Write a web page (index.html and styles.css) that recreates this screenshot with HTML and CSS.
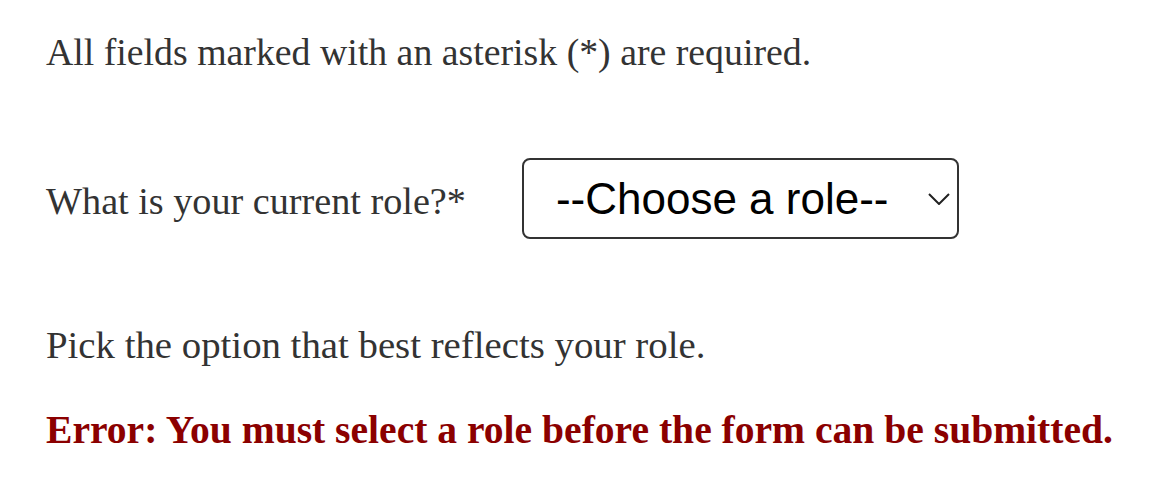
FILE: index.html
```html
<!DOCTYPE html>
<html lang="en">
<head>
<meta charset="utf-8">
<title>Role form</title>
<link rel="stylesheet" href="styles.css">
</head>
<body>
<form class="form">
  <p class="note">All fields marked with an asterisk (*) are required.</p>
  <div class="field">
    <label class="label" for="role">What is your current role?*</label>
    <div class="select-wrap">
      <select id="role" class="select">
        <option>--Choose a role--</option>
      </select>
      <svg class="chevron" width="22" height="12" viewBox="0 0 22 12" aria-hidden="true"><path d="M1 1 L11 11 L21 1" fill="none" stroke="#222" stroke-width="2"/></svg>
    </div>
  </div>
  <p class="hint">Pick the option that best reflects your role.</p>
  <p class="error">Error: You must select a role before the form can be submitted.</p>
</form>
</body>
</html>
```
FILE: styles.css
```css
html, body {
  margin: 0;
  padding: 0;
  background: #fff;
}
.form {
  padding: 30px 0 0 46px;
  font-family: "Liberation Serif", "Times New Roman", serif;
  font-size: 38.5px;
  color: #333;
}
.note {
  margin: 0;
  line-height: 44px;
  font-size: 37.8px;
}
.field {
  display: flex;
  align-items: center;
  gap: 56px;
  margin-top: 84px;
}
.label {
  line-height: 44px;
  font-size: 38.2px;
  position: relative;
  top: 2px;
}
.select-wrap {
  position: relative;
}
.select {
  appearance: none;
  -webkit-appearance: none;
  width: 437px;
  height: 81px;
  box-sizing: border-box;
  border: 2px solid #333;
  border-radius: 8px;
  background: #fff;
  font-family: "Liberation Sans", Arial, sans-serif;
  font-size: 44px;
  color: #000;
  padding: 0 0 0 32px;
}
.chevron {
  position: absolute;
  right: 9px;
  top: 35px;
  pointer-events: none;
}
.hint {
  margin: 84px 0 0;
  line-height: 44px;
  font-size: 38.8px;
}
.error {
  margin: 41px 0 0;
  line-height: 44px;
  font-size: 39.6px;
  font-weight: bold;
  color: #8b0000;
}
```
